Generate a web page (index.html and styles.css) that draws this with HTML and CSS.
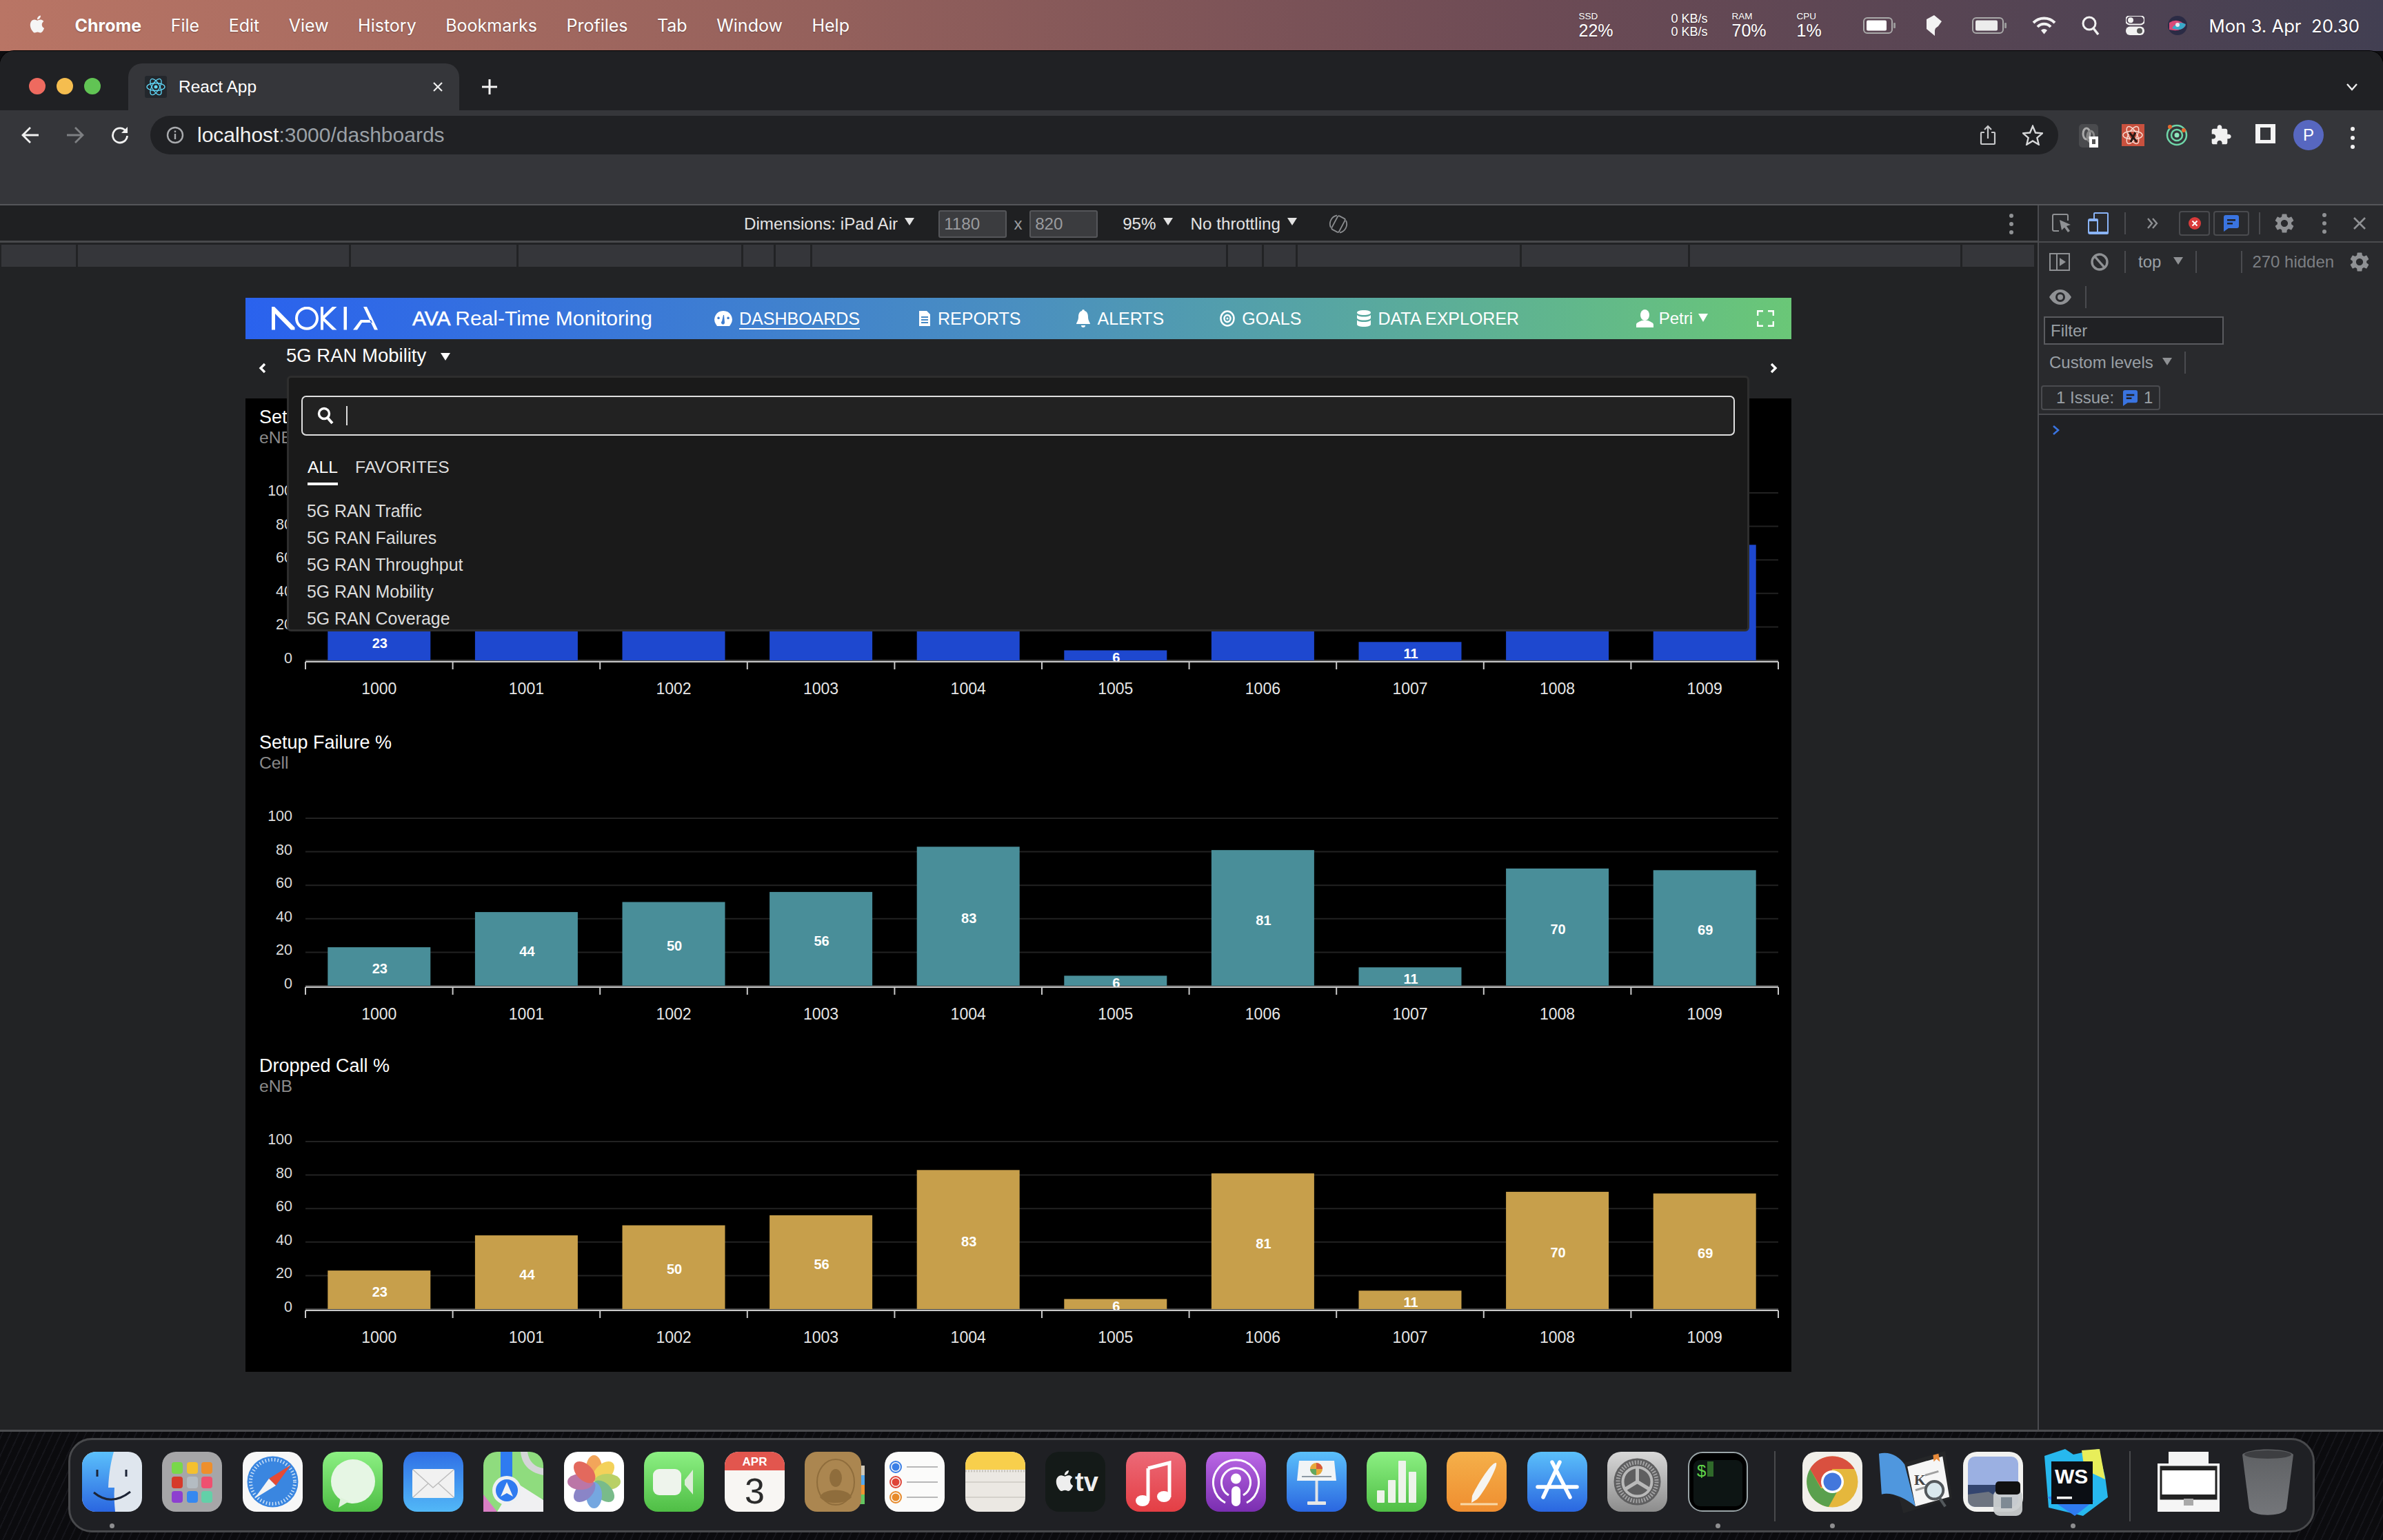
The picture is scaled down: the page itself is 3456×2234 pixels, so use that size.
FILE: index.html
```html
<!DOCTYPE html>
<html lang="en">
<head>
    <meta charset="UTF-8">
    <title>React App</title>
    <link rel="stylesheet" href="styles.css">
</head>
<body>
    <!-- shared defs -->
    <svg class="defs" width="0" height="0">
        <defs>
            <linearGradient id="gBlue" x1="0" y1="0" x2="0" y2="1"><stop offset="0" stop-color="#5bc0fb"/><stop offset="1" stop-color="#2a66e0"/></linearGradient>
            <linearGradient id="gMail" x1="0" y1="0" x2="0" y2="1"><stop offset="0" stop-color="#2f6fe6"/><stop offset="1" stop-color="#52b8f7"/></linearGradient>
            <linearGradient id="gGreen" x1="0" y1="0" x2="0" y2="1"><stop offset="0" stop-color="#8cf083"/><stop offset="1" stop-color="#4fbe45"/></linearGradient>
            <linearGradient id="gRed" x1="0" y1="0" x2="0" y2="1"><stop offset="0" stop-color="#ec6a78"/><stop offset="1" stop-color="#e43e44"/></linearGradient>
            <linearGradient id="gPurple" x1="0" y1="0" x2="0" y2="1"><stop offset="0" stop-color="#bb68e6"/><stop offset="1" stop-color="#7a2eb0"/></linearGradient>
            <linearGradient id="gOrange" x1="0" y1="0" x2="0" y2="1"><stop offset="0" stop-color="#f5b04a"/><stop offset="1" stop-color="#ef8e30"/></linearGradient>
            <linearGradient id="gGrey" x1="0" y1="0" x2="0" y2="1"><stop offset="0" stop-color="#d8d8d8"/><stop offset="1" stop-color="#8c8c8c"/></linearGradient>
            <linearGradient id="gTrash" x1="0" y1="0" x2="0" y2="1"><stop offset="0" stop-color="#5e6063"/><stop offset="1" stop-color="#74767a"/></linearGradient>
            <symbol id="gear" viewBox="0 0 24 24"><path d="M19.14 12.94c.04-.3.06-.61.06-.94 0-.32-.02-.64-.07-.94l2.03-1.58c.18-.14.23-.41.12-.61l-1.92-3.32c-.12-.22-.37-.29-.59-.22l-2.39.96c-.5-.38-1.03-.7-1.62-.94l-.36-2.54c-.04-.24-.24-.41-.48-.41h-3.84c-.24 0-.43.17-.47.41l-.36 2.54c-.59.24-1.13.57-1.62.94l-2.39-.96c-.22-.08-.47 0-.59.22L2.74 8.87c-.12.21-.08.47.12.61l2.03 1.58c-.05.3-.09.63-.09.94s.02.64.07.94l-2.03 1.58c-.18.14-.23.41-.12.61l1.92 3.32c.12.22.37.29.59.22l2.39-.96c.5.38 1.03.7 1.62.94l.36 2.54c.05.24.24.41.48.41h3.84c.24 0 .44-.17.47-.41l.36-2.54c.59-.24 1.13-.56 1.62-.94l2.39.96c.22.08.47 0 .59-.22l1.92-3.32c.12-.22.07-.47-.12-.61l-2.01-1.58zM12 15.6c-1.98 0-3.6-1.62-3.6-3.6s1.62-3.6 3.6-3.6 3.6 1.62 3.6 3.6-1.62 3.6-3.6 3.6z" fill="#8f9194"/></symbol>
            <symbol id="msg" viewBox="0 0 24 26"><path d="M4 1h16a3 3 0 0 1 3 3v13a3 3 0 0 1-3 3H8l-7 5V4a3 3 0 0 1 3-3z" fill="#3a74e0"/><path d="M6 7h12v2.500H6zM6 12h8v2.500H6z" fill="#202124"/></symbol>
            <symbol id="apple" viewBox="0 0 24 24"><path d="M18.71 19.5c-.83 1.24-1.71 2.45-3.05 2.47-1.34.03-1.77-.79-3.29-.79-1.53 0-2 .77-3.27.82-1.31.05-2.3-1.32-3.14-2.53C4.25 17 2.94 12.45 4.7 9.39c.87-1.52 2.43-2.48 4.12-2.51 1.28-.02 2.5.87 3.29.87.78 0 2.26-1.07 3.81-.91.65.03 2.47.26 3.64 1.98-.09.06-2.17 1.28-2.15 3.81.03 3.02 2.65 4.03 2.68 4.04-.03.07-.42 1.44-1.38 2.83M13 3.5c.73-.83 1.94-1.46 2.94-1.5.13 1.17-.34 2.35-1.04 3.19-.69.85-1.83 1.51-2.95 1.42-.15-1.15.41-2.35 1.05-3.11z"/></symbol>
        </defs>
    </svg>

    <header class="menubar">
        <svg class="apple-logo" width="30" height="34"><use href="#apple"/></svg>
        <span class="app-name">Chrome</span>
        <span>File</span><span>Edit</span><span>View</span><span>History</span><span>Bookmarks</span><span>Profiles</span><span>Tab</span><span>Window</span><span>Help</span>
        <div class="status">
            <div class="stat stat-ssd"><small>SSD</small><b>22%</b></div>
            <div class="stat stat-net"><em>0 KB/s</em><em>0 KB/s</em></div>
            <div class="stat stat-ram"><small>RAM</small><b>70%</b></div>
            <div class="stat stat-cpu"><small>CPU</small><b>1%</b></div>
            <svg class="st-bat" width="48" height="24" viewBox="0 0 48 24"><rect x="1" y="1" width="41" height="22" rx="5" fill="none" stroke="#aaa" stroke-width="2"/><rect x="5" y="4.500" width="29" height="15" rx="2" fill="#fff"/><rect x="44" y="8" width="3" height="8" rx="1" fill="#999"/></svg>
            <svg class="st-bolt" width="28" height="30" viewBox="0 0 28 30"><path d="M13 0l11 9-5 7-4 3-1 3v8L2 20V6z" fill="#f2f2f2"/></svg>
            <svg class="st-bat2" width="52" height="24" viewBox="0 0 52 24"><rect x="1" y="1" width="44" height="22" rx="5" fill="none" stroke="#aaa" stroke-width="2"/><rect x="5" y="4.500" width="32" height="15" rx="2" fill="#ececec"/><rect x="47" y="8" width="3" height="8" rx="1" fill="#999"/></svg>
            <svg class="st-wifi" width="35" height="26" viewBox="0 0 35 26"><path d="M2 9a22 22 0 0 1 31 0M8 15a13 13 0 0 1 19 0" fill="none" stroke="#f2f2f2" stroke-width="4"/><path d="M13 20a6 6 0 0 1 9 0l-4.500 5.500z" fill="#f2f2f2"/></svg>
            <svg class="st-search" width="26" height="28" viewBox="0 0 26 28"><circle cx="11" cy="11" r="9" fill="none" stroke="#f2f2f2" stroke-width="3"/><path d="M17 18l7 9" stroke="#f2f2f2" stroke-width="3.500"/></svg>
            <svg class="st-control" width="27" height="28" viewBox="0 0 27 28"><rect x="0" y="0" width="27" height="12.500" rx="6" fill="none" stroke="#f2f2f2" stroke-width="2"/><circle cx="7" cy="6.200" r="4" fill="#f2f2f2"/><rect x="0" y="15.500" width="27" height="12.500" rx="6" fill="#f2f2f2"/><circle cx="20" cy="21.700" r="4" fill="#555"/></svg>
            <svg class="st-siri" width="28" height="28" viewBox="0 0 28 28"><circle cx="14" cy="14" r="14" fill="#2b2b45"/><path d="M2 10q12-8 24 4-8 10-24 6z" fill="#d84a78"/><path d="M6 18q8-12 20-6-4 12-20 6z" fill="#38a8c8"/><circle cx="14" cy="13" r="3" fill="#e8e8f0"/></svg>
            <span class="st-date">Mon 3. Apr&nbsp; 20.30</span>
        </div>
    </header>

    <div class="window">
        <div class="tabstrip">
            <div class="lights"><i class="red"></i><i class="yellow"></i><i class="green"></i></div>
            <div class="tab">
                <svg class="favicon" width="32" height="32" viewBox="0 0 32 32"><rect width="32" height="32" rx="3" fill="#23272c"/><g fill="none" stroke="#61dafb" stroke-width="1.300"><ellipse cx="16" cy="16" rx="13" ry="5.500"/><ellipse cx="16" cy="16" rx="13" ry="5.500" transform="rotate(60 16 16)"/><ellipse cx="16" cy="16" rx="13" ry="5.500" transform="rotate(120 16 16)"/></g><circle cx="16" cy="16" r="2.500" fill="#61dafb"/></svg>
                <span class="tab-title">React App</span>
                <svg class="tab-close" width="16" height="16" viewBox="0 0 16 16"><path d="M2 2l12 12M14 2L2 14" stroke="#eee" stroke-width="2.200"/></svg>
            </div>
            <svg class="new-tab" width="24" height="24" viewBox="0 0 24 24"><path d="M12 1v22M1 12h22" stroke="#f4f4f4" stroke-width="3"/></svg>
            <svg class="tab-menu" width="18" height="12" viewBox="0 0 18 12"><path d="M2 2l7 8 7-8" fill="none" stroke="#eee" stroke-width="2.400"/></svg>
        </div>

        <div class="toolbar">
            <svg class="nav-btn" width="26" height="26" viewBox="0 0 26 26"><path d="M25 13H3M13 2L2 13l11 11" fill="none" stroke="#f1f1f1" stroke-width="2.800"/></svg>
            <svg class="nav-btn nav-forward" width="26" height="26" viewBox="0 0 26 26"><path d="M1 13h22M13 2l11 11-11 11" fill="none" stroke="#7e8083" stroke-width="2.800"/></svg>
            <svg class="nav-btn nav-reload" width="26" height="26" viewBox="0 0 26 26"><path d="M22 8a10.500 10.500 0 1 0 1.500 6" fill="none" stroke="#f1f1f1" stroke-width="2.800"/><path d="M24 1v9h-9z" fill="#f1f1f1"/></svg>
            <div class="omnibox">
                <svg class="info" width="26" height="26" viewBox="0 0 26 26"><circle cx="13" cy="13" r="11" fill="none" stroke="#a9abae" stroke-width="2.400"/><path d="M13 11v8M13 6.500v2.500" stroke="#a9abae" stroke-width="2.400"/></svg>
                <span class="url">localhost<span class="url-path">:3000/dashboards</span></span>
                <svg class="share" width="24" height="30" viewBox="0 0 24 30"><path d="M7 11H3a1 1 0 0 0-1 1v15a1 1 0 0 0 1 1h18a1 1 0 0 0 1-1V12a1 1 0 0 0-1-1h-4M12 20V2M7 7l5-5 5 5" fill="none" stroke="#c8c9cb" stroke-width="2.200"/></svg>
                <svg class="star" width="30" height="30" viewBox="0 0 30 30"><path d="M15 2l4 9.500 10 .8-7.600 6.600 2.300 9.800L15 23.500l-8.700 5.200 2.300-9.800L1 12.300l10-.8z" fill="none" stroke="#d8d9da" stroke-width="2.400"/></svg>
            </div>
            <svg class="ext ext-first" width="28" height="34" viewBox="0 0 28 34"><rect width="28" height="34" rx="5" fill="#4a4b4e"/><ellipse cx="11" cy="14" rx="5" ry="8" fill="none" stroke="#aaa" stroke-width="3"/><ellipse cx="17" cy="18" rx="5" ry="8" fill="none" stroke="#888" stroke-width="3"/><rect x="15" y="18" width="13" height="16" fill="#fff"/><rect x="19" y="22" width="5" height="7" fill="#555"/></svg>
            <svg class="ext ext-red" width="33" height="32" viewBox="0 0 33 32"><rect width="33" height="32" fill="#c9513e"/><g fill="none" stroke="#f6d8cf" stroke-width="1.500"><ellipse cx="16" cy="16" rx="14" ry="6"/><ellipse cx="16" cy="16" rx="14" ry="6" transform="rotate(60 16 16)"/><ellipse cx="16" cy="16" rx="14" ry="6" transform="rotate(120 16 16)"/></g><path d="M11 12l11 14M20 12l-7 14" stroke="#2a1a16" stroke-width="3"/></svg>
            <svg class="ext ext-ring" width="32" height="32" viewBox="0 0 32 32"><circle cx="16" cy="16" r="14" fill="none" stroke="#6fd6a8" stroke-width="2.500"/><circle cx="16" cy="16" r="8" fill="none" stroke="#6fd6a8" stroke-width="2.500"/><circle cx="16" cy="16" r="3.500" fill="#8ee6bd"/><circle cx="6" cy="4" r="3" fill="#e3692f"/><circle cx="26" cy="9" r="3" fill="#e3692f"/></svg>
            <svg class="ext ext-puzzle" width="32" height="32" viewBox="0 0 24 24"><path d="M20.500 11H19V7c0-1.100-.9-2-2-2h-4V3.500C13 2.120 11.880 1 10.500 1S8 2.120 8 3.500V5H4c-1.100 0-1.990.9-1.990 2v3.800H3.500c1.490 0 2.700 1.210 2.700 2.700s-1.210 2.700-2.700 2.700H2V20c0 1.100.9 2 2 2h3.800v-1.500c0-1.490 1.210-2.700 2.700-2.700 1.490 0 2.700 1.210 2.700 2.700V22H17c1.100 0 2-.9 2-2v-4h1.500c1.380 0 2.500-1.120 2.500-2.500S21.880 11 20.500 11z" fill="#f1f1f1"/></svg>
            <svg class="ext ext-side" width="29" height="28" viewBox="0 0 29 28"><path fill-rule="evenodd" d="M0 0h29v28H0zM7 5v18h15V5z" fill="#f4f4f4"/></svg>
            <div class="avatar">P</div>
            <div class="dots dots-light"><i></i><i></i><i></i></div>
        </div>

        <div class="workspace">
            <div class="viewport">
                <div class="device-bar">
                    <span class="dev-text">Dimensions: iPad Air</span><i class="caret dev-caret"></i>
                    <span class="dev-input dev-width">1180</span>
                    <span class="dev-x">x</span>
                    <span class="dev-input">820</span>
                    <span class="dev-text dev-zoom">95%</span><i class="caret dev-caret"></i>
                    <span class="dev-text dev-throttle">No throttling</span><i class="caret dev-caret"></i>
                    <svg class="dev-rotate" width="28" height="30" viewBox="0 0 28 30"><g fill="none" stroke="#8a8c8f" stroke-width="1.800"><rect x="8" y="4" width="12" height="22" rx="2" transform="rotate(28 14 15)"/><path d="M3 20A12.500 12.500 0 0 1 12 2.500M25 10a12.500 12.500 0 0 1-9 17.500"/></g></svg>
                    <div class="dots dots-grey dev-dots"><i></i><i></i><i></i></div>
                </div>
                <div class="ruler">
                    <i></i><i></i><i></i><i></i><i></i><i></i><i></i><i></i><i></i><i></i><i></i><i></i><i></i>
                </div>

                <div class="app">
                    <nav class="app-header">
                        <svg class="nokia" width="154" height="34" viewBox="0 0 154 34"><g fill="#fff"><path d="M0 0h4l29.500 30v3.500H28L5 10v23.500H0z"/><path d="M71 0h4v33.500h-4zM88 0h6.500L77 16.700l17.500 16.800H88L71 16.700zM104.500 0h4.500v33.500h-4.500z"/><path d="M133 0h5l16 33.500h-5zM118 33.500h6l7-10.500h15l-2-4h-15z"/></g><ellipse cx="51" cy="16.700" rx="15" ry="15" fill="none" stroke="#fff" stroke-width="4"/></svg>
                        <span class="app-title"><b>AVA</b> Real-Time Monitoring</span>
                        <a class="nav-item nav-active"><svg width="26" height="24" viewBox="0 0 26 24"><path fill-rule="evenodd" d="M13 1a12.500 12.500 0 0 1 11 19l-2 3H4l-2-3A12.500 12.500 0 0 1 13 1zM11 16a2.500 2.500 0 1 0 4 2l-1-11h-1zM6 9.500a1.800 1.800 0 1 0 .1 0zM20 9.500a1.800 1.800 0 1 0 .1 0z" fill="#fff"/></svg><span>DASHBOARDS</span></a>
                        <a class="nav-item"><svg width="18" height="24" viewBox="0 0 18 24"><path fill-rule="evenodd" d="M1 1h11l5 5v17H1zM4 9v2h10V9zM4 13v2h10v-2zM4 17v2h10v-2z" fill="#fff"/></svg><span>REPORTS</span></a>
                        <a class="nav-item"><svg width="20" height="26" viewBox="0 0 20 26"><path d="M10 0a2 2 0 0 1 2 2c4 1 5 5 5 9 0 5 3 8 3 10H0c0-2 3-5 3-10 0-4 1-8 5-9a2 2 0 0 1 2-2zM7 23h6a3 3 0 0 1-6 0z" fill="#fff"/></svg><span>ALERTS</span></a>
                        <a class="nav-item"><svg width="22" height="24" viewBox="0 0 22 24"><g fill="none" stroke="#fff" stroke-width="2.500"><ellipse cx="11" cy="12" rx="9.500" ry="10.500"/><ellipse cx="11" cy="12" rx="4.500" ry="5"/></g><circle cx="11" cy="12" r="1.500" fill="#fff"/></svg><span>GOALS</span></a>
                        <a class="nav-item"><svg width="20" height="24" viewBox="0 0 20 24"><path d="M10 0c6 0 10 1.500 10 3.500S16 7 10 7 0 5.500 0 3.500 4 0 10 0zM0 7c2 2 6 2.500 10 2.500S18 9 20 7v4c0 2-4 3.500-10 3.500S0 13 0 11zM0 14.500c2 2 6 2.500 10 2.500s8-.5 10-2.500v6c0 2-4 3.500-10 3.500S0 22.500 0 20.500z" fill="#fff"/></svg><span>DATA EXPLORER</span></a>
                        <div class="user">
                            <svg width="25" height="26" viewBox="0 0 25 26"><ellipse cx="12.500" cy="8" rx="6.500" ry="8" fill="#fff"/><path d="M0 26v-4c0-3 4-4 8-6h9c4 2 8 3 8 6v4z" fill="#fff"/></svg>
                            <span>Petri</span><i class="caret user-caret"></i>
                        </div>
                        <svg class="expand" width="25" height="24" viewBox="0 0 25 24"><path d="M1 8V1h8M16 1h8v7M24 16v7h-8M9 23H1v-7" fill="none" stroke="#fff" stroke-width="2.800"/></svg>
                    </nav>

                    <div class="sub-header">
                        <svg class="chev" width="12" height="16" viewBox="0 0 12 16"><path d="M9 2L3 8l6 6" fill="none" stroke="#fff" stroke-width="3.400"/></svg>
                        <span class="board-name">5G RAN Mobility</span><i class="caret board-caret"></i>
                        <svg class="chev chev-right" width="12" height="16" viewBox="0 0 12 16"><path d="M3 2l6 6-6 6" fill="none" stroke="#fff" stroke-width="3.400"/></svg>
                    </div>

                    <!-- dropdown de tableros -->
                    <div class="board-menu">
                        <div class="search">
                            <svg width="24" height="26" viewBox="0 0 24 26"><circle cx="10" cy="10" r="7.500" fill="none" stroke="#fff" stroke-width="3.400"/><path d="M15 16l7 8" stroke="#fff" stroke-width="4"/></svg>
                            <i class="cursor"></i>
                        </div>
                        <div class="menu-tabs"><span class="menu-tab-active">ALL</span><span>FAVORITES</span></div>
                        <ul class="menu-list">
                            <li>5G RAN Traffic</li>
                            <li>5G RAN Failures</li>
                            <li>5G RAN Throughput</li>
                            <li>5G RAN Mobility</li>
                            <li>5G RAN Coverage</li>
                        </ul>
                    </div>

                    <main class="charts">
                        <section class="chart chart-first">
                            <h3>Setup Success %</h3>
                            <p>eNB</p>
                            <div class="chart-plot" data-fill="#1f49d3"></div>
                        </section>
                        <section class="chart">
                            <h3>Setup Failure %</h3>
                            <p>Cell</p>
                            <div class="chart-plot" data-fill="#4a919c"></div>
                        </section>
                        <section class="chart">
                            <h3>Dropped Call %</h3>
                            <p>eNB</p>
                            <div class="chart-plot" data-fill="#cba24d"></div>
                        </section>
                    </main>
                </div>
            </div>

            <aside class="devtools">
                <div class="dt-row dt-main">
                    <svg class="dt-inspect" width="28" height="28" viewBox="0 0 28 28"><path d="M10 25H3a2 2 0 0 1-2-2V3a2 2 0 0 1 2-2h18a2 2 0 0 1 2 2v7" fill="none" stroke="#8f9194" stroke-width="2"/><path d="M11 9l16 7-6 2 5 7-3 2-5-7-4 4z" fill="#8f9194"/></svg>
                    <svg class="dt-device" width="30" height="32" viewBox="0 0 30 32"><path d="M9 10V2a1 1 0 0 1 1-1h18a1 1 0 0 1 1 1v28a1 1 0 0 1-1 1H3a2 2 0 0 1-2-2V12a2 2 0 0 1 2-2h10a1 1 0 0 1 1 1v20" fill="none" stroke="#8ab4f8" stroke-width="2"/><rect x="1" y="10" width="13" height="3" fill="#8ab4f8"/><rect x="1" y="28" width="28" height="3" fill="#8ab4f8"/></svg>
                    <i class="dt-sep dt-sep-a"></i>
                    <svg class="dt-more" width="18" height="18" viewBox="0 0 18 18"><path d="M2 2l6 7-6 7M9 2l6 7-6 7" fill="none" stroke="#8f9194" stroke-width="2.400"/></svg>
                    <div class="dt-badge dt-badge-err"><svg width="18" height="18" viewBox="0 0 18 18"><circle cx="9" cy="9" r="9" fill="#d93b3b"/><path d="M5.500 5.500l7 7M12.500 5.500l-7 7" stroke="#fff" stroke-width="2"/></svg></div>
                    <div class="dt-badge dt-badge-msg"><svg width="24" height="26"><use href="#msg"/></svg></div>
                    <i class="dt-sep dt-sep-b"></i>
                    <svg class="dt-gear" width="34" height="34"><use href="#gear"/></svg>
                    <div class="dots dots-grey dt-dots"><i></i><i></i><i></i></div>
                    <svg class="dt-close" width="20" height="20" viewBox="0 0 20 20"><path d="M2 2l16 16M18 2L2 18" stroke="#8f9194" stroke-width="2.600"/></svg>
                </div>
                <div class="console-bar">
                    <div class="dt-row dt-row-tall">
                        <svg class="dt-panel" width="30" height="26" viewBox="0 0 30 26"><rect x="1" y="1" width="28" height="24" fill="none" stroke="#8f9194" stroke-width="2"/><path d="M11 1v24" stroke="#8f9194" stroke-width="2"/><path d="M15 7l9 6-9 6z" fill="#8f9194"/></svg>
                        <svg class="dt-block" width="26" height="26" viewBox="0 0 26 26"><circle cx="13" cy="13" r="11" fill="none" stroke="#8f9194" stroke-width="3.400"/><path d="M6 5l14 16" stroke="#8f9194" stroke-width="3.400"/></svg>
                        <i class="dt-sep dt-sep-c"></i>
                        <span class="dt-top">top</span><i class="caret dt-caret"></i>
                        <i class="dt-sep dt-sep-d"></i>
                        <i class="dt-sep dt-sep-e"></i>
                        <span class="dt-hidden">270 hidden</span>
                        <svg class="dt-gear-2" width="34" height="34"><use href="#gear"/></svg>
                    </div>
                    <div class="dt-row dt-row-eye">
                        <svg width="32" height="22" viewBox="0 0 32 22"><path fill-rule="evenodd" d="M16 0c8 0 13 6 16 11-3 5-8 11-16 11S3 16 0 11C3 6 8 0 16 0zm0 4a7 7 0 1 0 0 14 7 7 0 0 0 0-14zm0 3a4 4 0 1 1 0 8 4 4 0 0 1 0-8z" fill="#8f9194"/></svg>
                        <i class="dt-sep dt-sep-f"></i>
                    </div>
                    <div class="filter">Filter</div>
                    <div class="dt-row dt-row-levels"><span>Custom levels</span><i class="caret dt-caret dt-caret-levels"></i><i class="dt-sep dt-sep-g"></i></div>
                    <div class="issues"><span>1 Issue:</span><svg width="23" height="25"><use href="#msg"/></svg><span>1</span></div>
                </div>
                <div class="console-input">
                    <svg width="12" height="16" viewBox="0 0 12 16"><path d="M2 2l7 6-7 6" fill="none" stroke="#3a74e0" stroke-width="2.600"/></svg>
                </div>
            </aside>
        </div>
    </div>

    <footer class="desktop">
        <div class="dock">
            <div class="dock-item running"><svg width="87" height="87" viewBox="0 0 87 87"><rect width="87" height="87" rx="20" fill="#dfe6ee"/><path d="M20 0h26c-4 14-7 30-8 52h9c-1 12 0 24 1 35H20A20 20 0 0 1 0 67V20A20 20 0 0 1 20 0z" fill="url(#gBlue)"/><path d="M22 26v10M64 26v10" stroke="#1c2436" stroke-width="3"/><path d="M17 59q25 21 53-1" fill="none" stroke="#1c2436" stroke-width="3"/></svg></div>
            <div class="dock-item"><svg width="87" height="87" viewBox="0 0 87 87"><rect width="87" height="87" rx="20" fill="#a6a6a8"/><g><rect x="14" y="15" width="16" height="17" rx="4" fill="#79d84a"/><rect x="36" y="15" width="16" height="17" rx="4" fill="#f4c02f"/><rect x="57" y="15" width="16" height="17" rx="4" fill="#ee8f2c"/><rect x="14" y="36" width="16" height="17" rx="4" fill="#d63a2a"/><rect x="36" y="36" width="16" height="17" rx="4" fill="#b4bcc2"/><rect x="57" y="36" width="16" height="17" rx="4" fill="#ef5070"/><rect x="14" y="57" width="16" height="17" rx="4" fill="#8d3fd0"/><rect x="36" y="57" width="16" height="17" rx="4" fill="#3588f0"/><rect x="57" y="57" width="16" height="17" rx="4" fill="#63d0a8"/></g></svg></div>
            <div class="dock-item"><svg width="87" height="87" viewBox="0 0 87 87"><rect width="87" height="87" rx="20" fill="#f7f7f7"/><circle cx="43.500" cy="43.500" r="37" fill="#3a86e0"/><circle cx="43.500" cy="43.500" r="32" fill="none" stroke="#cfe3f8" stroke-width="5" stroke-dasharray="1.500 3"/><path d="M70 19L38 39l10 10z" fill="#e54a35"/><path d="M17 68l21-29 10 10z" fill="#f4f4f4"/></svg></div>
            <div class="dock-item"><svg width="87" height="87" viewBox="0 0 87 87"><rect width="87" height="87" rx="20" fill="url(#gGreen)"/><ellipse cx="44" cy="43" rx="32" ry="32" fill="#e6f6e4"/><path d="M26 66l-3 15 15-9z" fill="#dff3dc"/></svg></div>
            <div class="dock-item"><svg width="87" height="87" viewBox="0 0 87 87"><rect width="87" height="87" rx="20" fill="url(#gMail)"/><rect x="13" y="25" width="61" height="42" rx="3" fill="#f1f1f1"/><path d="M14 26l29 26 30-26M14 66l22-20M73 66L51 46" fill="none" stroke="#bdbdbd" stroke-width="1.500"/></svg></div>
            <div class="dock-item"><svg width="87" height="87" viewBox="0 0 87 87"><rect width="87" height="87" rx="20" fill="#8fdc7e"/><path d="M0 62l20 25H0z" fill="#d87fc4"/><path d="M52 87l20-22 15 22z" fill="#f4cf42"/><path d="M20 87L46 44l41 26v-4L87 87z" fill="#f0f0f2"/><rect x="25" y="0" width="17" height="50" fill="#2f7bf0"/><path d="M54 0c2 20 14 30 33 34v-10C74 22 66 14 64 0z" fill="#d5d5d8"/><circle cx="34" cy="56" r="21" fill="#eef0f2"/><circle cx="34" cy="56" r="16" fill="#2f7bf0"/><path d="M34 44l9 21-9-5-9 5z" fill="#f4f4f4"/></svg></div>
            <div class="dock-item"><svg width="87" height="87" viewBox="0 0 87 87"><rect width="87" height="87" rx="20" fill="#fff"/><g opacity=".78"><ellipse cx="43.500" cy="24" rx="11.500" ry="19" fill="#f08d2c"/><ellipse cx="43.500" cy="24" rx="11.500" ry="19" fill="#f0c52c" transform="rotate(45 43.500 43.500)"/><ellipse cx="43.500" cy="24" rx="11.500" ry="19" fill="#a6c43c" transform="rotate(90 43.500 43.500)"/><ellipse cx="43.500" cy="24" rx="11.500" ry="19" fill="#54a86a" transform="rotate(135 43.500 43.500)"/><ellipse cx="43.500" cy="24" rx="11.500" ry="19" fill="#4f8fd8" transform="rotate(180 43.500 43.500)"/><ellipse cx="43.500" cy="24" rx="11.500" ry="19" fill="#6a64b8" transform="rotate(225 43.500 43.500)"/><ellipse cx="43.500" cy="24" rx="11.500" ry="19" fill="#a8508f" transform="rotate(270 43.500 43.500)"/><ellipse cx="43.500" cy="24" rx="11.500" ry="19" fill="#dc3f30" transform="rotate(315 43.500 43.500)"/></g></svg></div>
            <div class="dock-item"><svg width="87" height="87" viewBox="0 0 87 87"><rect width="87" height="87" rx="20" fill="url(#gGreen)"/><rect x="13" y="25" width="41" height="38" rx="9" fill="#eef4ec"/><path d="M59 41l12-15v36L59 48z" fill="#dcecd8"/></svg></div>
            <div class="dock-item"><svg width="87" height="87" viewBox="0 0 87 87"><rect width="87" height="87" rx="20" fill="#f8f6f3"/><path d="M0 27V20A20 20 0 0 1 20 0h47a20 20 0 0 1 20 20v7z" fill="#e2564e"/><text class="cal-month" x="43.500" y="20" text-anchor="middle">APR</text><text class="cal-day" x="43.500" y="75" text-anchor="middle">3</text></svg></div>
            <div class="dock-item"><svg width="87" height="87" viewBox="0 0 87 87"><rect x="60" y="20" width="27" height="14" fill="#cfc8b8"/><rect x="60" y="34" width="27" height="14" fill="#54a8ee"/><rect x="60" y="48" width="27" height="14" fill="#ef9332"/><rect x="60" y="62" width="27" height="14" fill="#62c560"/><rect width="82" height="87" rx="18" fill="#ab8650"/><ellipse cx="45" cy="44" rx="27" ry="33" fill="none" stroke="#8f6d3c" stroke-width="2"/><ellipse cx="45" cy="38" rx="9" ry="13" fill="#8f6d3c"/><path d="M22 66c4-14 42-14 46 0-8 10-36 12-46 0z" fill="#8f6d3c"/></svg></div>
            <div class="dock-item"><svg width="87" height="87" viewBox="0 0 87 87"><rect width="87" height="87" rx="20" fill="#fbfbfa"/><g fill="none" stroke-width="2"><circle cx="16" cy="22" r="8" stroke="#3a7fe6"/><circle cx="16" cy="44" r="8" stroke="#df4438"/><circle cx="16" cy="66" r="8" stroke="#e78a2a"/></g><circle cx="16" cy="22" r="5.500" fill="#3a7fe6"/><circle cx="16" cy="44" r="5.500" fill="#df4438"/><circle cx="16" cy="66" r="5.500" fill="#e78a2a"/><path d="M32 22h45M32 44h45M32 66h45" stroke="#b8b8b8" stroke-width="2"/></svg></div>
            <div class="dock-item"><svg width="87" height="87" viewBox="0 0 87 87"><rect width="87" height="87" rx="20" fill="#ebe8e3"/><path d="M0 26V20A20 20 0 0 1 20 0h47a20 20 0 0 1 20 20v6z" fill="#f8cf4c"/><path d="M0 28h87" stroke="#c8c4bc" stroke-width="3" stroke-dasharray="2 2"/><path d="M0 44h87M0 66h87" stroke="#d4d1cb" stroke-width="2"/></svg></div>
            <div class="dock-item"><svg width="87" height="87" viewBox="0 0 87 87"><rect width="87" height="87" rx="20" fill="#141a18"/><svg x="10" y="24" width="36" height="36" viewBox="0 0 24 24" fill="#eee"><use href="#apple"/></svg><text class="tv-text" x="43" y="57">tv</text></svg></div>
            <div class="dock-item"><svg width="87" height="87" viewBox="0 0 87 87"><rect width="87" height="87" rx="20" fill="url(#gRed)"/><path d="M32 24l31-8v50" fill="none" stroke="#fff" stroke-width="5"/><path d="M32 24v47" stroke="#fff" stroke-width="5"/><ellipse cx="24" cy="71" rx="10" ry="8" fill="#fff"/><ellipse cx="55" cy="65" rx="10" ry="8" fill="#fff"/></svg></div>
            <div class="dock-item"><svg width="87" height="87" viewBox="0 0 87 87"><rect width="87" height="87" rx="20" fill="url(#gPurple)"/><g fill="none" stroke="#fff" stroke-width="3"><path d="M28 74a33 33 0 1 1 31 0"/><path d="M33 63a21 21 0 1 1 21 0"/></g><circle cx="43.500" cy="39" r="7.500" fill="#fff"/><rect x="37" y="50" width="13" height="29" rx="6.500" fill="#fff"/></svg></div>
            <div class="dock-item"><svg width="87" height="87" viewBox="0 0 87 87"><rect width="87" height="87" rx="20" fill="url(#gBlue)"/><path d="M18 13h51l3 29H15z" fill="#f1f4f6"/><circle cx="43" cy="25" r="9" fill="#e8a93a"/><path d="M43 16a9 9 0 0 1 9 9h-9z" fill="#d85a3a"/><path d="M43 25v9a9 9 0 0 1-9-9z" fill="#62a860"/><path d="M22 36h43" stroke="#8d9aa4" stroke-width="2"/><rect x="41.500" y="42" width="4" height="31" fill="#e0e4e8"/><rect x="30" y="72" width="27" height="5" rx="1" fill="#e6e6e6"/></svg></div>
            <div class="dock-item"><svg width="87" height="87" viewBox="0 0 87 87"><rect width="87" height="87" rx="20" fill="url(#gGreen)"/><rect x="15" y="56" width="11" height="18" rx="1" fill="#edf3ea"/><rect x="31" y="41" width="11" height="33" rx="1" fill="#edf3ea"/><rect x="46" y="13" width="11" height="61" rx="1" fill="#edf3ea"/><rect x="61" y="29" width="11" height="45" rx="1" fill="#edf3ea"/></svg></div>
            <div class="dock-item"><svg width="87" height="87" viewBox="0 0 87 87"><rect width="87" height="87" rx="20" fill="url(#gOrange)"/><path d="M72 16c3 6-20 46-28 53l-8 5 1-10c5-12 28-50 35-48z" fill="#f6f4f0"/><path d="M20 76h54" stroke="#f8d8a8" stroke-width="3"/></svg></div>
            <div class="dock-item"><svg width="87" height="87" viewBox="0 0 87 87"><rect width="87" height="87" rx="20" fill="url(#gBlue)"/><path d="M47 15L23 66M36 15l26 51M15 51h57" stroke="#fff" stroke-width="5.500" stroke-linecap="round"/></svg></div>
            <div class="dock-item"><svg width="87" height="87" viewBox="0 0 87 87"><rect width="87" height="87" rx="20" fill="url(#gGrey)"/><circle cx="43.500" cy="43.500" r="34" fill="#5f5f60"/><circle cx="43.500" cy="43.500" r="28" fill="none" stroke="#a2a2a3" stroke-width="6" stroke-dasharray="2 2"/><circle cx="43.500" cy="43.500" r="21" fill="none" stroke="#b9b9b9" stroke-width="4"/><path d="M43.500 43.500V22M43.500 43.500l-18 11M43.500 43.500l18 11" stroke="#b9b9b9" stroke-width="5"/></svg></div>
            <div class="dock-item running"><svg width="87" height="87" viewBox="0 0 87 87"><rect x="1" y="1" width="85" height="85" rx="20" fill="#000" stroke="#9aa5a8" stroke-width="2"/><rect x="8" y="12" width="71" height="67" rx="9" fill="#0d1514"/><text class="term-text" x="13" y="36">$</text><rect x="28" y="14" width="9" height="22" fill="#2f6a2a"/></svg></div>
            <i class="dock-sep"></i>
            <div class="dock-item running"><svg width="87" height="87" viewBox="0 0 87 87"><rect width="87" height="87" rx="20" fill="#f1efea"/><circle cx="43.500" cy="43.500" r="37" fill="#e5b73c"/><path d="M43.500 6.500A37 37 0 0 0 11 25l16 27 16.500-27h32A37 37 0 0 0 43.500 6.500z" fill="#d9503f"/><path d="M11 25a37 37 0 0 0 27 55l15-27-26 0z" fill="#5aa04e"/><circle cx="43.500" cy="43.500" r="16.500" fill="#fff"/><circle cx="43.500" cy="43.500" r="13" fill="#4377dc"/></svg></div>
            <div class="dock-item dock-dict"><svg width="108" height="100" viewBox="0 0 110 100"><path d="M2 8c18-5 30 4 36 14l62-18 10 70-72 22-6-22C18 64 8 64 6 68z" fill="#252628"/><path d="M2 8c16-4 30 4 38 16l16 62C40 72 18 64 6 68z" fill="#4f97de"/><path d="M44 27l52-15 10 60-50 14z" fill="#f6f6f6"/><path d="M82 10l8-2 2 12-5-4-4 4z" fill="#e88a3a"/><text class="dict-text" x="54" y="54">K</text><path d="M70 40l20-6M56 62l20-6" stroke="#a0a0a0" stroke-width="3"/><circle cx="84" cy="62" r="13" fill="#d9e8ee" stroke="#53585c" stroke-width="4"/><path d="M92 74l8 12" stroke="#53585c" stroke-width="4"/></svg></div>
            <div class="dock-item dock-preview"><svg width="90" height="94" viewBox="0 0 90 94"><rect width="87" height="87" rx="20" fill="#f2f2f0"/><rect x="7" y="7" width="73" height="73" rx="10" fill="#9bb0e2"/><rect x="7" y="48" width="73" height="14" fill="#33456f"/><path d="M7 62l30-4 20 12 0 10H17A10 10 0 0 1 7 70z" fill="#6d7480"/><rect x="44" y="55" width="42" height="38" rx="9" fill="#c9ccce" opacity=".95"/><rect x="47" y="43" width="36" height="19" rx="5" fill="#111"/><rect x="55" y="66" width="16" height="16" fill="#7f8a94"/></svg></div>
            <div class="dock-item running dock-ws"><svg width="100" height="97" viewBox="0 0 100 97"><path d="M8 10l30-10 12 8 36-8 10 40 4 30-36 27-50-12z" fill="#27b8ee"/><path d="M62 2l26-2 8 44-30-14z" fill="#e8ee5a"/><path d="M12 70l40 27 28-22-30-14z" fill="#2f7bf0"/><rect x="18" y="18" width="60" height="62" fill="#0b0e14"/><text class="ws-text" x="23" y="50">WS</text><rect x="26" y="69" width="22" height="3.500" fill="#fff"/></svg></div>
            <i class="dock-sep"></i>
            <div class="dock-item"><svg width="90" height="87" viewBox="0 0 90 87"><rect x="16" y="0" width="58" height="34" fill="#f4f4f4"/><rect x="0" y="17" width="90" height="70" fill="#f5f5f5"/><rect x="5" y="22" width="80" height="46" fill="#fff" stroke="#222" stroke-width="3"/><rect x="5" y="22" width="80" height="5" fill="#222"/><rect x="5" y="62" width="80" height="6" fill="#222"/><rect x="38" y="68" width="14" height="10" fill="#a9a9a9"/></svg></div>
            <div class="dock-item dock-trash"><svg width="78" height="96" viewBox="0 0 78 96"><path d="M2 8c10-10 64-10 74 0l-10 78c-3 13-51 13-54 0z" fill="url(#gTrash)"/><ellipse cx="39" cy="8" rx="34" ry="6" fill="#3d3e41"/></svg></div>
        </div>
    </footer>

    <script src="charts.js"></script>
</body>
</html>
```

FILE: styles.css
```css
* {
    box-sizing: border-box;
}
html, body {
    margin: 0;
    height: 2234px;
    width: 3456px;
    overflow: hidden;
}
body {
    font-family: "Liberation Sans", Arial, sans-serif;
    background: #0d0d10;
    color: #fff;
    display: flex;
    flex-direction: column;
}
svg {
    display: block;
    flex: none;
}
.defs {
    position: absolute;
}

/* menu bar */
.menubar {
    height: 74px;
    flex: none;
    display: flex;
    align-items: center;
    gap: 42.500px;
    padding: 0 34px 0 39px;
    font-family: Inter, "Liberation Sans", sans-serif;
    font-size: 25px;
    background: linear-gradient(90deg, #b97565 0%, #95615c 34%, #6d4b55 64%, #423f52 100%);
    text-shadow: 0 1px 2px rgba(0, 0, 0, .3);
    white-space: nowrap;
}
.apple-logo {
    fill: #f5f5f5;
    margin-top: -4px;
}
.app-name {
    font-weight: bold;
    font-size: 25px;
    margin-left: -3px;
}
.status {
    margin-left: auto;
    display: flex;
    align-items: center;
    font-family: "Liberation Sans", sans-serif;
}
.stat {
    display: flex;
    flex-direction: column;
    line-height: 1;
}
.stat small {
    font-size: 13.500px;
    margin-bottom: 1px;
}
.stat b {
    font-weight: normal;
    font-size: 25px;
}
.stat em {
    font-style: normal;
    font-size: 18px;
    line-height: 19px;
}
.stat-ssd { width: 134px; }
.stat-net { width: 88px; }
.stat-ram { width: 94px; }
.stat-cpu { width: 96px; }
.st-bolt { margin-left: 42px; }
.st-bat2 { margin-left: 40px; }
.st-wifi { margin-left: 35px; }
.st-search { margin-left: 37px; }
.st-control { margin-left: 38px; }
.st-siri { margin-left: 34px; }
.st-date {
    margin-left: 32px;
    font-family: Inter, "Liberation Sans", sans-serif;
    font-size: 25.700px;
}

/* browser window */
.window {
    height: 2003px;
    flex: none;
    display: flex;
    flex-direction: column;
    border-radius: 20px 20px 0 0;
    overflow: hidden;
    background: #202124;
    border-bottom: 3px solid #4c4d50;
    box-shadow: 0 0 0 1px #000;
}
.tabstrip {
    height: 86px;
    flex: none;
    display: flex;
    align-items: flex-end;
    background: #202124;
    padding-left: 42px;
    position: relative;
}
.lights {
    display: flex;
    gap: 16px;
    width: 144px;
    height: 68px;
    margin-top: 0;
    padding-top: 21px;
}
.lights i {
    width: 24px;
    height: 24px;
    border-radius: 50%;
}
.red { background: #ee6a5f; }
.yellow { background: #f5bd4f; }
.green { background: #61c454; }
.tab {
    width: 480px;
    height: 68px;
    background: #35363a;
    border-radius: 20px 20px 0 0;
    display: flex;
    align-items: center;
    padding: 0 23px 0 24px;
    font-size: 24.500px;
}
.tab-title {
    margin-left: 17px;
    flex: 1;
}
.new-tab {
    margin: 0 0 22px 32px;
}
.tab-menu {
    margin: 0 36px 28px auto;
}
.toolbar {
    height: 138px;
    flex: none;
    display: flex;
    align-items: flex-start;
    background: #35363a;
    border-bottom: 2px solid #55565a;
    padding: 8px 0 0 31px;
}
.nav-btn {
    margin-top: 15px;
}
.nav-forward { margin-left: 39px; }
.nav-reload { margin-left: 39px; }
.omnibox {
    width: 2767px;
    height: 56px;
    margin-left: 31px;
    background: #202124;
    border-radius: 28px;
    display: flex;
    align-items: center;
    padding-left: 23px;
}
.url {
    margin-left: 19px;
    font-size: 30px;
    flex: 1;
    color: #f1f1f1;
}
.url-path { color: #9aa0a6; }
.star { margin: 0 22px 0 38px; }
.ext { margin-top: 12px; }
.ext-first { margin-left: 30px; }
.ext-red { margin-left: 34px; }
.ext-ring { margin-left: 31px; }
.ext-puzzle { margin-left: 32px; }
.ext-side { margin-left: 34px; }
.avatar {
    width: 44px;
    height: 44px;
    margin: 6px 0 0 26px;
    border-radius: 50%;
    background: #5767c0;
    font-size: 24px;
    display: flex;
    align-items: center;
    justify-content: center;
}
.dots {
    display: flex;
    flex-direction: column;
    gap: 6px;
}
.dots i {
    width: 6px;
    height: 6px;
    border-radius: 50%;
    background: #8f9194;
}
.dots-light {
    margin: 16px 0 0 39px;
    gap: 7px;
}
.dots-light i { background: #f1f1f1; }

.workspace {
    flex: 1;
    min-height: 0;
    display: flex;
}

/* emulated viewport */
.viewport {
    width: 2955px;
    flex: none;
    overflow: hidden;
    background: #222325;
}
.device-bar {
    height: 54px;
    display: flex;
    align-items: center;
    padding: 2px 0 0 1079px;
    background: #1f2022;
    border-bottom: 3px solid #48494c;
    font-size: 24.200px;
    color: #e3e3e3;
}
.caret {
    display: inline-block;
    width: 0;
    height: 0;
    border-left: 7px solid transparent;
    border-right: 7px solid transparent;
    border-top: 11px solid currentColor;
    flex: none;
}
.dev-caret { margin: -6px 0 0 10px; }
.dev-input {
    width: 99px;
    height: 40px;
    background: #3b3c3f;
    border: 2px solid #55565a;
    border-radius: 3px;
    color: #9a9b9e;
    padding-left: 6px;
    line-height: 36px;
}
.dev-width { margin-left: 35px; }
.dev-x {
    width: 33px;
    text-align: center;
    color: #9a9b9e;
}
.dev-zoom { margin-left: 36px; }
.dev-throttle { margin-left: 26px; }
.dev-rotate { margin-left: 46px; }
.dev-dots { margin-left: 959px; }

.ruler {
    height: 32px;
    margin: 3px 0 0 2px;
    display: grid;
    grid-template-columns: 108px 393px 240px 323px 44px 50px 600px 49px 46px 322px 241px 392px 104px;
    gap: 3px;
}
.ruler i { background: #35363a; }

/* dashboard */
.app {
    width: 2242px;
    margin: 45px 0 0 356px;
    position: relative;
}
.app-header {
    height: 60px;
    display: flex;
    align-items: center;
    padding: 0 25px 0 38px;
    background: linear-gradient(90deg, #2a62ee 0%, #4a8fc0 50%, #6ac777 100%);
    font-size: 25px;
}
.app-title {
    font-size: 30px;
    margin-left: 50px;
    width: 438px;
    flex: none;
}
.app-title b { font-weight: normal; -webkit-text-stroke: .6px #fff; }
.nav-item {
    display: flex;
    align-items: center;
    gap: 10px;
    margin-right: 81px;
}
.nav-active {
    margin-right: 85px;
}
.nav-active span {
    border-bottom: 2px solid #fff;
    line-height: 28px;
    margin-top: 2px;
}
.user {
    margin-left: auto;
    display: flex;
    align-items: center;
    gap: 8px;
    margin-right: 71px;
    font-size: 24px;
}
.user-caret { border-top-width: 12px; margin-top: -3px; }
.sub-header {
    height: 86px;
    display: flex;
    align-items: flex-start;
    background: #222325;
    padding-left: 19px;
}
.chev { margin-top: 34px; }
.chev-right { margin-left: auto; margin-right: 20px; }
.board-name {
    margin: 8px 0 0 28px;
    font-size: 27.500px;
    line-height: 32px;
}
.board-caret { margin: 20px 0 0 21px; }

/* menu sobre la grafica */
.board-menu {
    position: absolute;
    left: 60px;
    top: 113px;
    width: 2121px;
    height: 371px;
    background: #1a1a1a;
    border: 3px solid #2e2e2e;
    border-radius: 6px;
    padding: 26px 18px 0;
    z-index: 2;
    overflow: hidden;
}
.search {
    height: 58px;
    background: #222;
    border: 2px solid #e0e0e0;
    border-radius: 7px;
    display: flex;
    align-items: center;
    padding-left: 21px;
}
.cursor {
    width: 2px;
    height: 28px;
    background: #ddd;
    margin-left: 18px;
}
.menu-tabs {
    display: flex;
    gap: 25px;
    margin: 32px 0 0 9px;
    color: #ddd;
    font-size: 24.700px;
}
.menu-tab-active {
    color: #fff;
    height: 40px;
    border-bottom: 4px solid #fff;
}
.menu-list {
    list-style: none;
    margin: 18px 0 0 8px;
    padding: 0;
    color: #ddd;
    font-size: 24.900px;
}
.menu-list li {
    height: 39px;
    line-height: 39px;
}

.charts {
    background: #000;
    padding-bottom: 2px;
}
.chart {
    height: 469px;
    padding-top: 10px;
    overflow: hidden;
}
.chart-first {
    margin-bottom: 3px;
}
.chart h3 {
    margin: 1px 0 0;
    padding-left: 20px;
    font-weight: normal;
    font-size: 27px;
    line-height: 32px;
}
.chart p {
    margin: -1px 0 0;
    padding-left: 20px;
    font-size: 24.700px;
    line-height: 30px;
    color: #8a8a8a;
}
.tick-y { font-size: 21.500px; fill: #ddd; text-anchor: end; }
.tick-x { font-size: 23px; fill: #e6e6e6; text-anchor: middle; }
.bar-label { font-size: 20px; font-weight: bold; fill: #fff; text-anchor: middle; }

/* devtools */
.devtools {
    flex: 1;
    display: flex;
    flex-direction: column;
    background: #292a2d;
    border-left: 2px solid #4a4b4f;
    color: #9aa0a6;
    font-size: 24px;
}
.dt-row {
    display: flex;
    align-items: center;
}
.dt-main {
    height: 54px;
    flex: none;
    border-bottom: 2px solid #4a4b4f;
    padding-left: 19px;
}
.dt-sep {
    width: 2px;
    height: 32px;
    background: #4a4b4f;
    flex: none;
}
.dt-device { margin-left: 24px; }
.dt-sep-a { margin-left: 23px; }
.dt-more { margin-left: 30px; }
.dt-badge {
    height: 36px;
    border: 2px solid #4a4b4f;
    border-radius: 4px;
    display: flex;
    align-items: center;
    justify-content: center;
}
.dt-badge-err { width: 45px; margin-left: 29px; }
.dt-badge-msg { width: 52px; margin-left: 5px; }
.dt-sep-b { margin-left: 14px; }
.dt-gear { margin-left: 18px; }
.dt-dots { margin-left: 38px; }
.dt-close { margin-left: 38px; }
.console-bar {
    flex: none;
    height: 250px;
    padding-left: 15px;
    border-bottom: 2px solid #4a4b4f;
}
.dt-row-tall {
    height: 56px;
}
.dt-block { margin-left: 30px; }
.dt-sep-c { margin-left: 23px; }
.dt-top { margin-left: 18px; }
.dt-caret { margin: -4px 0 0 18px; color: #8f9194; }
.dt-caret-levels { margin-left: 13px; }
.dt-sep-d { margin-left: 18px; }
.dt-sep-e { margin-left: 64px; }
.dt-hidden { margin-left: 14px; color: #7c7f83; }
.dt-gear-2 { margin-left: 20px; }
.dt-row-eye {
    height: 45px;
    gap: 20px;
}
.dt-sep-f { height: 32px; }
.filter {
    width: 261px;
    height: 41px;
    margin: 6px 0 0 -8px;
    background: #202124;
    border: 2px solid #5a5b5f;
    padding-left: 8px;
    line-height: 37px;
}
.dt-row-levels {
    height: 52px;
}
.dt-sep-g { margin-left: 18px; }
.issues {
    width: 173px;
    height: 36px;
    margin: 7px 0 0 -12px;
    border: 2px solid #4a4b4f;
    border-radius: 4px;
    display: flex;
    align-items: center;
    gap: 12px;
    padding-left: 20px;
}
.issues span:last-child { margin-left: -4px; }
.console-input {
    flex: 1;
    background: #202124;
    padding: 14px 0 0 19px;
}

/* dock */
.desktop {
    flex: 1;
    background: repeating-linear-gradient(115deg, #0b0b0e 0 3px, #15151a 3px 5px, #0b0b0e 5px 11px);
    padding: 9px 0 0 99px;
}
.dock {
    width: 3258px;
    height: 137px;
    background: #1f2024;
    border: 3px solid #48494c;
    border-radius: 34px;
    display: flex;
    align-items: flex-start;
    gap: 29.450px;
    padding: 17px 0 0 17px;
}
.dock-item {
    position: relative;
    width: 87px;
    height: 87px;
    flex: none;
}
.running::after {
    content: "";
    position: absolute;
    left: 40px;
    top: 104px;
    width: 7px;
    height: 7px;
    border-radius: 50%;
    background: #8e8e90;
}
.dock-dict svg { margin: -6px 0 0 -7px; }
.dock-ws svg { margin-left: -6px; margin-top: -4px; }
.dock-trash { margin-left: 5px; }
.dock-trash svg { margin-top: -4px; }
.dock-sep {
    width: 2px;
    height: 102px;
    background: #48494c;
    margin: 0 9px;
    flex: none;
    align-self: flex-start;
    margin-top: -1px;
}
.cal-month { font-size: 17px; font-weight: bold; fill: #fff; }
.cal-day { font-size: 52px; fill: #2b2b2b; }
.tv-text { font-size: 38px; font-weight: bold; fill: #eee; }
.term-text { font-size: 24px; fill: #60d34a; }
.dict-text { font-size: 22px; font-weight: bold; fill: #444; font-family: "Liberation Serif", serif; }
.ws-text { font-size: 30px; font-weight: bold; fill: #fff; }
```

FILE: charts.js
```js
const chartValues = [23, 44, 50, 56, 83, 6, 81, 11, 70, 69];
const chartIds = [1000, 1001, 1002, 1003, 1004, 1005, 1006, 1007, 1008, 1009];

const left = 87;
const right = 2223;
const zeroY = 308;
const axisY = 310;
const unit = 2.43;
const band = (right - left) / chartValues.length;

function buildChart(fill) {
    let out = `<svg width="2242" height="397">`;

    // rejilla y eje y
    for (let v = 0; v <= 100; v += 20) {
        const y = zeroY - v * unit;
        out += `<line x1="${left}" x2="${right}" y1="${y}" y2="${y}" stroke="${v === 0 ? '#444' : '#222'}" stroke-width="2"/>`;
        out += `<text class="tick-y" x="${left - 19}" y="${y + 4}">${v}</text>`;
    }

    // barras
    chartValues.forEach((v, i) => {
        const x = left + i * band;
        const h = v * unit;
        out += `<rect x="${x + 32.3}" y="${zeroY - h}" width="149" height="${h}" fill="${fill}" fill-opacity=".98"/>`;
        out += `<text class="bar-label" x="${x + band / 2 + 1}" y="${zeroY - h / 2 + 10}">${v}</text>`;
    });

    // eje x
    out += `<line x1="${left}" x2="${right}" y1="${axisY}" y2="${axisY}" stroke="#c8c8c8" stroke-width="2"/>`;
    for (let i = 0; i <= chartValues.length; i++) {
        const x = left + i * band;
        out += `<line x1="${x}" x2="${x}" y1="${axisY}" y2="${axisY + 11}" stroke="#c8c8c8" stroke-width="2"/>`;
    }
    chartIds.forEach((id, i) => {
        out += `<text class="tick-x" x="${left + i * band + band / 2}" y="357">${id}</text>`;
    });

    return out + `</svg>`;
}

document.querySelectorAll('.chart-plot').forEach((plot) => {
    plot.innerHTML = buildChart(plot.dataset.fill);
});
```
